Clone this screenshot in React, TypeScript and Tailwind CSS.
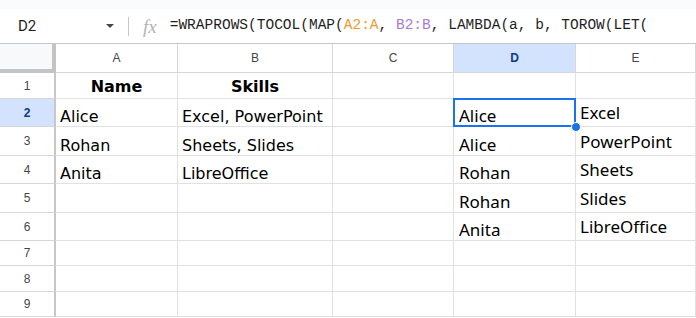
const cols = ["A", "B", "C", "D", "E"];
const heights = ["h-[26px]", "h-[28px]", "h-[29px]", "h-[28px]", "h-[29px]", "h-[28px]", "h-[25px]", "h-[26px]", "h-[25px]"];

const rows: string[][] = [
  ["Name", "Skills", "", "", ""],
  ["Alice", "Excel, PowerPoint", "", "Alice", "Excel"],
  ["Rohan", "Sheets, Slides", "", "Alice", "PowerPoint"],
  ["Anita", "LibreOffice", "", "Rohan", "Sheets"],
  ["", "", "", "Rohan", "Slides"],
  ["", "", "", "Anita", "LibreOffice"],
  ["", "", "", "", ""],
  ["", "", "", "", ""],
  ["", "", "", "", ""],
];

const widths = ["w-[122px]", "w-[155px]", "w-[121px]", "w-[122px]", "w-[120px]"];

const verdana = { fontFamily: '"DejaVu Sans", Verdana, sans-serif' };
const noto = { fontFamily: '"Noto Sans", "Open Sans", sans-serif' };

function Cell({ value, row, col }: { value: string; row: number; col: number }) {
  const header = row === 0 && col < 2;
  const selected = row === 1 && col === 3;
  const right = col >= 3;
  return (
    <div
      className={`relative shrink-0 ${widths[col]} h-full border-r border-b border-[#e1e1e1] flex items-end overflow-visible whitespace-nowrap leading-[18px] text-[#000] ${
        header ? "justify-center font-bold pb-[2px]" : right ? (col === 3 ? "pl-[5px] pb-[1px]" : "pl-[4px] pb-[4px]") : "pl-[4px] pb-[0px]"
      } ${right ? "text-[17px]" : "text-[16px]"}`}
      style={right ? noto : verdana}
    >
      {value}
      {selected && (
        <>
          <div className="absolute left-[-1px] top-[-1px] right-[-1px] bottom-[-1px] border-2 border-[#1a73e8] pointer-events-none" />
          <div className="absolute right-[-6px] bottom-[-6px] w-[10px] h-[10px] rounded-full bg-[#1a73e8] border border-white z-10" />
        </>
      )}
    </div>
  );
}

export default function App() {
  return (
    <div className="w-[696px] h-[318px] overflow-hidden bg-white" style={{ fontFamily: '"Liberation Sans", Arial, sans-serif' }}>
      <div className="h-[9px] bg-[#f9fbfd]" />
      {/* formula bar */}
      <div className="h-[35px] flex items-center border-b border-[#c7c7c7] bg-white">
        <div className="w-[100px] pl-[18px] text-[15px] text-[#1f1f1f]" style={{ fontFamily: "Roboto, sans-serif" }}>
          D2
        </div>
        <div className="w-0 h-0 border-l-[4px] border-r-[4px] border-t-[4px] border-l-transparent border-r-transparent border-t-[#444746] ml-[6px]" />
        <div className="w-px h-[19px] bg-[#c7c7c7] ml-[14px]" />
        <div className="ml-[14px] text-[19px] italic text-[#b4b4b4] leading-none" style={{ fontFamily: '"Liberation Serif", serif' }}>
          fx
        </div>
        <div className="ml-[13px] text-[14.5px] text-[#1f1f1f] whitespace-nowrap" style={{ fontFamily: '"Liberation Mono", monospace' }}>
          =WRAPROWS(TOCOL(MAP(<span className="text-[#ee9a2e]">A2:A</span>, <span className="text-[#a77cd3]">B2:B</span>, LAMBDA(a, b, TOROW(LET(
        </div>
      </div>
      {/* column headers */}
      <div className="flex h-[29px]">
        <div className="w-[56px] shrink-0 bg-[#f8f9fa] border-r-4 border-b-4 border-[#c4c4c4]" />
        {cols.map((c, i) => (
          <div
            key={c}
            className={`${widths[i]} shrink-0 flex items-center justify-center text-[12px] border-r border-b border-[#d7d7d7] ${
              c === "D" ? "bg-[#d3e3fd] text-[#0b3a8c] font-bold" : "bg-white text-[#444746]"
            }`}
          >
            {c}
          </div>
        ))}
      </div>
      {/* body */}
      {rows.map((r, ri) => (
        <div key={ri} className={`flex ${heights[ri]}`}>
          <div
            className={`w-[56px] shrink-0 flex items-center justify-center text-[12px] border-r-2 border-r-[#c7c7c7] border-b border-b-[#d7d7d7] ${
              ri === 1 ? "bg-[#d3e3fd] text-[#0b3a8c] font-bold" : "bg-white text-[#444746]"
            }`}
          >
            {ri + 1}
          </div>
          {r.map((v, ci) => (
            <Cell key={ci} value={v} row={ri} col={ci} />
          ))}
        </div>
      ))}
    </div>
  );
}
